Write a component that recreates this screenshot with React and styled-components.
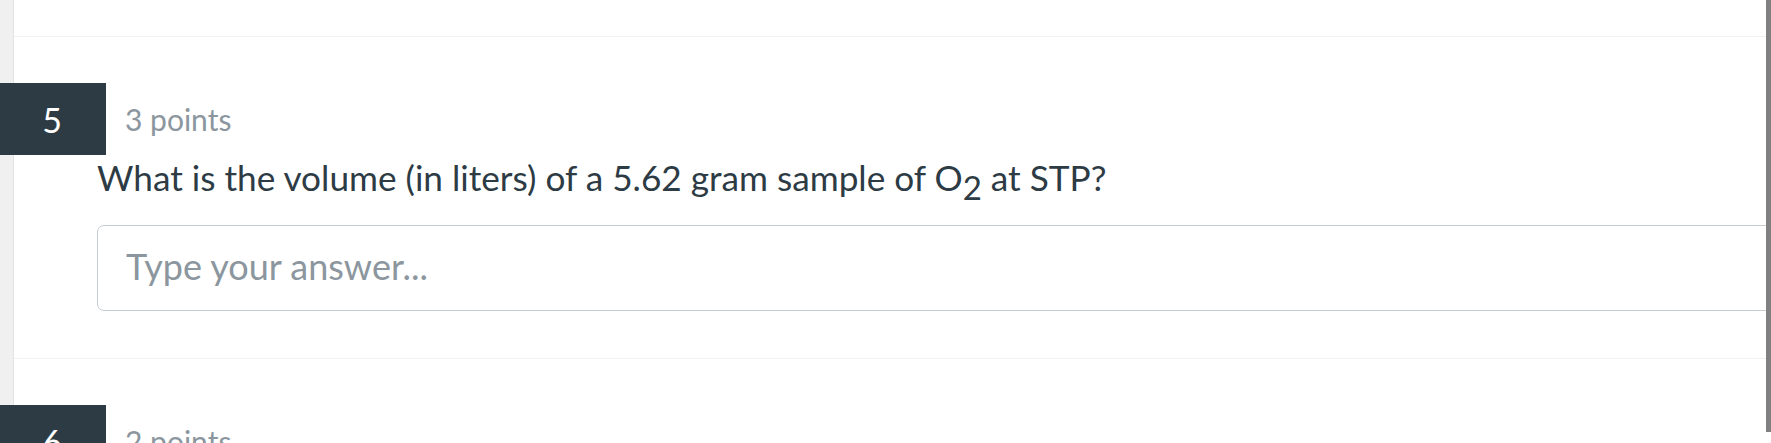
import styled, { createGlobalStyle } from "styled-components";

const GlobalStyle = createGlobalStyle`
  html, body {
    margin: 0;
    padding: 0;
    background: #fff;
  }
  body {
    font-family: Lato, "Open Sans", "Liberation Sans", sans-serif;
    color: #2d3b45;
  }
`;

const Viewport = styled.div`
  display: flex;
  width: 1771px;
  height: 443px;
  overflow: hidden;
`;

/* gutter strip on the left is painted as part of the page so the badge can overhang it */
const Page = styled.div`
  flex: 1;
  min-width: 0;
  overflow: hidden;
  padding-left: 14px;
  background: linear-gradient(to right, #f0f0f0 0, #f0f0f0 13px, #e4e4e4 13px, #e4e4e4 14px, #fff 14px);
`;

const ScrollTrack = styled.div`
  width: 5px;
  flex-shrink: 0;
  background: #fff;
`;

const ScrollThumb = styled.div`
  height: 432px;
  background: #808080;
`;

const PrevTail = styled.div`
  height: 36px;
  border-bottom: 1px solid #f2f2f2;
`;

const Question = styled.section`
  padding: 46px 0 0 0;
  border-bottom: ${(p) => (p.$last ? "none" : "1px solid #f2f2f2")};
`;

const Header = styled.div`
  display: flex;
  align-items: center;
  gap: 19px;
  margin-left: -14px;
`;

const Badge = styled.div`
  width: 106px;
  height: 72px;
  flex-shrink: 0;
  background: #2d3b45;
  color: #fff;
  display: flex;
  align-items: center;
  justify-content: center;
  font-size: 34px;
  padding-right: 2px;
  box-sizing: border-box;
`;

const Points = styled.div`
  font-size: 30px;
  color: #8b969e;
`;

const Body = styled.div`
  padding-left: 83px;
`;

const Prompt = styled.p`
  margin: 1px 0 0 0;
  font-size: 35.2px;
  line-height: 43px;
  color: #2d3b45;

  sub {
    font-size: 33px;
    vertical-align: -9px;
    line-height: 0;
  }
`;

const AnswerInput = styled.input`
  display: block;
  box-sizing: border-box;
  width: calc(100% + 40px);
  height: 86px;
  margin: 26px 0 47px 0;
  padding: 0 28px 5px 28px;
  border: 1px solid #c7cdd1;
  border-radius: 7px;
  font-family: inherit;
  font-size: 36px;
  color: #2d3b45;
  background: #fff;
  outline: none;

  &::placeholder {
    color: #8b969e;
  }
`;

const questions = [
  {
    n: 5,
    points: 3,
    prompt: (
      <>
        What is the volume (in liters) of a 5.62 gram sample of O<sub>2</sub> at STP?
      </>
    ),
  },
  { n: 6, points: 2, prompt: "" },
];

export default function App() {
  return (
    <Viewport>
      <GlobalStyle />
      <Page>
        <PrevTail />
        {questions.map((q, i) => (
          <Question key={q.n} $last={i === questions.length - 1}>
            <Header>
              <Badge>{q.n}</Badge>
              <Points>{q.points} points</Points>
            </Header>
            {q.prompt && (
              <Body>
                <Prompt>{q.prompt}</Prompt>
                <AnswerInput placeholder="Type your answer..." />
              </Body>
            )}
          </Question>
        ))}
      </Page>
      <ScrollTrack>
        <ScrollThumb />
      </ScrollTrack>
    </Viewport>
  );
}
